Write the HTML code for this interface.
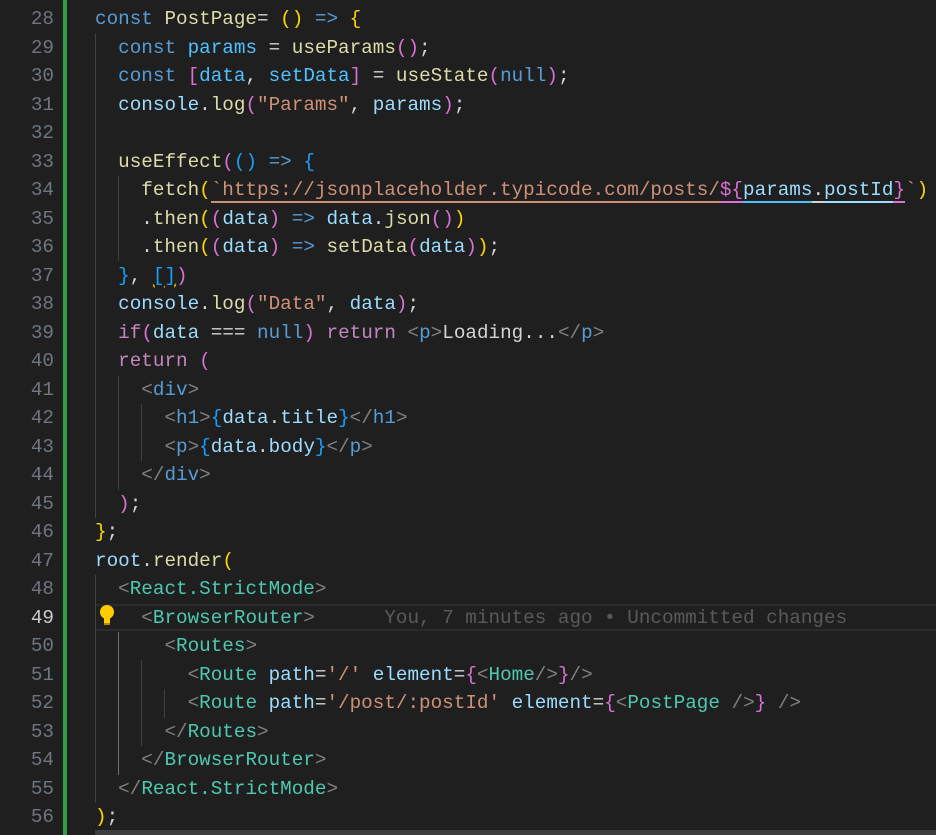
<!DOCTYPE html>
<html><head><meta charset="utf-8"><style>
html,body{margin:0;padding:0;background:#1f1f1f;width:936px;height:835px;overflow:hidden}
body{position:relative;font-family:"Liberation Mono",monospace;font-size:19.3px}
.ln{position:absolute;left:0;width:54px;text-align:right;color:#6e7681;height:28.5px;line-height:28.5px}
.c{position:absolute;left:95px;white-space:pre;height:28.5px;line-height:28.5px;color:#d4d4d4}
.g{position:absolute;width:1px;background:#404040}
.k{color:#569cd6}.f{color:#dcdcaa}.v{color:#9cdcfe}.n{color:#4fc1ff}.s{color:#ce9178}.t{color:#4ec9b0}.a{color:#808080}.p{color:#c586c0}
.y{color:#ffd700}.m{color:#da70d6}.b{color:#179fff}
.u{border-bottom:2px solid #ce9178}
</style></head><body>
<div style="position:absolute;left:63px;top:0;width:4px;height:835px;background:#2ea043"></div>
<div style="position:absolute;left:95px;top:830px;width:841px;height:5px;background:#3c3c3c"></div>
<div style="position:absolute;left:95px;top:604px;width:841px;height:27px;border-top:2px solid #2b2b2b;border-bottom:2px solid #2b2b2b;box-sizing:border-box"></div>
<div class="g" style="left:95px;top:33px;height:485px"></div>
<div class="g" style="left:118px;top:176px;height:85px"></div>
<div class="g" style="left:118px;top:376px;height:114px"></div>
<div class="g" style="left:141px;top:404px;height:57px"></div>
<div class="g" style="left:95px;top:575px;height:228px"></div>
<div class="g" style="left:118px;top:632px;height:143px;background:#707070"></div>
<div class="g" style="left:141px;top:660px;height:86px"></div>
<div class="g" style="left:164px;top:689px;height:29px"></div>
<div style="position:absolute;left:100px;top:605px;width:14px;height:14px;border-radius:50%;background:#ffcc00"></div>
<div style="position:absolute;left:104px;top:617px;width:6px;height:6px;background:#ffcc00;border-bottom:2px solid #b08a00"></div>

<div class="ln" style="top:5px">28</div><div class="c" style="top:5px"><span class="k">const</span> <span class="f">PostPage</span>= <span class="y">()</span> <span class="k">=&gt;</span> <span class="y">{</span></div>
<div class="ln" style="top:33.5px">29</div><div class="c" style="top:33.5px">  <span class="k">const</span> <span class="n">params</span> = <span class="f">useParams</span><span class="m">()</span>;</div>
<div class="ln" style="top:62px">30</div><div class="c" style="top:62px">  <span class="k">const</span> <span class="m">[</span><span class="n">data</span>, <span class="n">setData</span><span class="m">]</span> = <span class="f">useState</span><span class="m">(</span><span class="k">null</span><span class="m">)</span>;</div>
<div class="ln" style="top:90.5px">31</div><div class="c" style="top:90.5px">  <span class="v">console</span>.<span class="f">log</span><span class="m">(</span><span class="s">"Params"</span>, <span class="v">params</span><span class="m">)</span>;</div>
<div class="ln" style="top:119px">32</div>
<div class="ln" style="top:147.5px">33</div><div class="c" style="top:147.5px">  <span class="f">useEffect</span><span class="m">(</span><span class="b">()</span> <span class="k">=&gt;</span> <span class="b">{</span></div>
<div class="ln" style="top:176px">34</div><div class="c" style="top:176px">    <span class="f">fetch</span><span class="y">(</span><span class="s u">`https://jsonplaceholder.typicode.com/posts/</span><span class="m u" style="border-color:#da70d6">${</span><span class="v u" style="border-color:#4fc1ff">params</span><span class="u" style="border-color:#d4d4d4">.</span><span class="v u" style="border-color:#9cdcfe">postId</span><span class="m u" style="border-color:#da70d6">}</span><span class="s">`</span><span class="y">)</span></div>
<div class="ln" style="top:204.5px">35</div><div class="c" style="top:204.5px">    .<span class="f">then</span><span class="y">(</span><span class="m">(</span><span class="v">data</span><span class="m">)</span> <span class="k">=&gt;</span> <span class="v">data</span>.<span class="f">json</span><span class="m">()</span><span class="y">)</span></div>
<div class="ln" style="top:233px">36</div><div class="c" style="top:233px">    .<span class="f">then</span><span class="y">(</span><span class="m">(</span><span class="v">data</span><span class="m">)</span> <span class="k">=&gt;</span> <span class="f">setData</span><span class="m">(</span><span class="v">data</span><span class="m">)</span><span class="y">)</span>;</div>
<div class="ln" style="top:261.5px">37</div><div class="c" style="top:261.5px">  <span class="b">}</span>, <span class="b" style="text-decoration:underline wavy #cca700">[]</span><span class="m">)</span></div>
<div class="ln" style="top:290px">38</div><div class="c" style="top:290px">  <span class="v">console</span>.<span class="f">log</span><span class="m">(</span><span class="s">"Data"</span>, <span class="v">data</span><span class="m">)</span>;</div>
<div class="ln" style="top:318.5px">39</div><div class="c" style="top:318.5px">  <span class="p">if</span><span class="m">(</span><span class="v">data</span> === <span class="k">null</span><span class="m">)</span> <span class="p">return</span> <span class="a">&lt;</span><span class="k">p</span><span class="a">&gt;</span>Loading...<span class="a">&lt;/</span><span class="k">p</span><span class="a">&gt;</span></div>
<div class="ln" style="top:347px">40</div><div class="c" style="top:347px">  <span class="p">return</span> <span class="m">(</span></div>
<div class="ln" style="top:375.5px">41</div><div class="c" style="top:375.5px">    <span class="a">&lt;</span><span class="k">div</span><span class="a">&gt;</span></div>
<div class="ln" style="top:404px">42</div><div class="c" style="top:404px">      <span class="a">&lt;</span><span class="k">h1</span><span class="a">&gt;</span><span class="b">{</span><span class="v">data</span>.<span class="v">title</span><span class="b">}</span><span class="a">&lt;/</span><span class="k">h1</span><span class="a">&gt;</span></div>
<div class="ln" style="top:432.5px">43</div><div class="c" style="top:432.5px">      <span class="a">&lt;</span><span class="k">p</span><span class="a">&gt;</span><span class="b">{</span><span class="v">data</span>.<span class="v">body</span><span class="b">}</span><span class="a">&lt;/</span><span class="k">p</span><span class="a">&gt;</span></div>
<div class="ln" style="top:461px">44</div><div class="c" style="top:461px">    <span class="a">&lt;/</span><span class="k">div</span><span class="a">&gt;</span></div>
<div class="ln" style="top:489.5px">45</div><div class="c" style="top:489.5px">  <span class="m">)</span>;</div>
<div class="ln" style="top:518px">46</div><div class="c" style="top:518px"><span class="y">}</span>;</div>
<div class="ln" style="top:546.5px">47</div><div class="c" style="top:546.5px"><span class="v">root</span>.<span class="f">render</span><span class="y">(</span></div>
<div class="ln" style="top:575px">48</div><div class="c" style="top:575px">  <span class="a">&lt;</span><span class="t">React.StrictMode</span><span class="a">&gt;</span></div>
<div class="ln" style="top:603.5px;color:#cccccc">49</div><div class="c" style="top:603.5px">    <span class="a">&lt;</span><span class="t">BrowserRouter</span><span class="a">&gt;</span>      <span style="color:#5a5a5a">You, 7 minutes ago • Uncommitted changes</span></div>
<div class="ln" style="top:632px">50</div><div class="c" style="top:632px">      <span class="a">&lt;</span><span class="t">Routes</span><span class="a">&gt;</span></div>
<div class="ln" style="top:660.5px">51</div><div class="c" style="top:660.5px">        <span class="a">&lt;</span><span class="t">Route</span> <span class="v">path</span>=<span class="s">'/'</span> <span class="v">element</span>=<span class="m">{</span><span class="a">&lt;</span><span class="t">Home</span><span class="a">/&gt;</span><span class="m">}</span><span class="a">/&gt;</span></div>
<div class="ln" style="top:689px">52</div><div class="c" style="top:689px">        <span class="a">&lt;</span><span class="t">Route</span> <span class="v">path</span>=<span class="s">'/post/:postId'</span> <span class="v">element</span>=<span class="m">{</span><span class="a">&lt;</span><span class="t">PostPage</span> <span class="a">/&gt;</span><span class="m">}</span> <span class="a">/&gt;</span></div>
<div class="ln" style="top:717.5px">53</div><div class="c" style="top:717.5px">      <span class="a">&lt;/</span><span class="t">Routes</span><span class="a">&gt;</span></div>
<div class="ln" style="top:746px">54</div><div class="c" style="top:746px">    <span class="a">&lt;/</span><span class="t">BrowserRouter</span><span class="a">&gt;</span></div>
<div class="ln" style="top:774.5px">55</div><div class="c" style="top:774.5px">  <span class="a">&lt;/</span><span class="t">React.StrictMode</span><span class="a">&gt;</span></div>
<div class="ln" style="top:803px">56</div><div class="c" style="top:803px"><span class="y">)</span>;</div>
</body></html>
